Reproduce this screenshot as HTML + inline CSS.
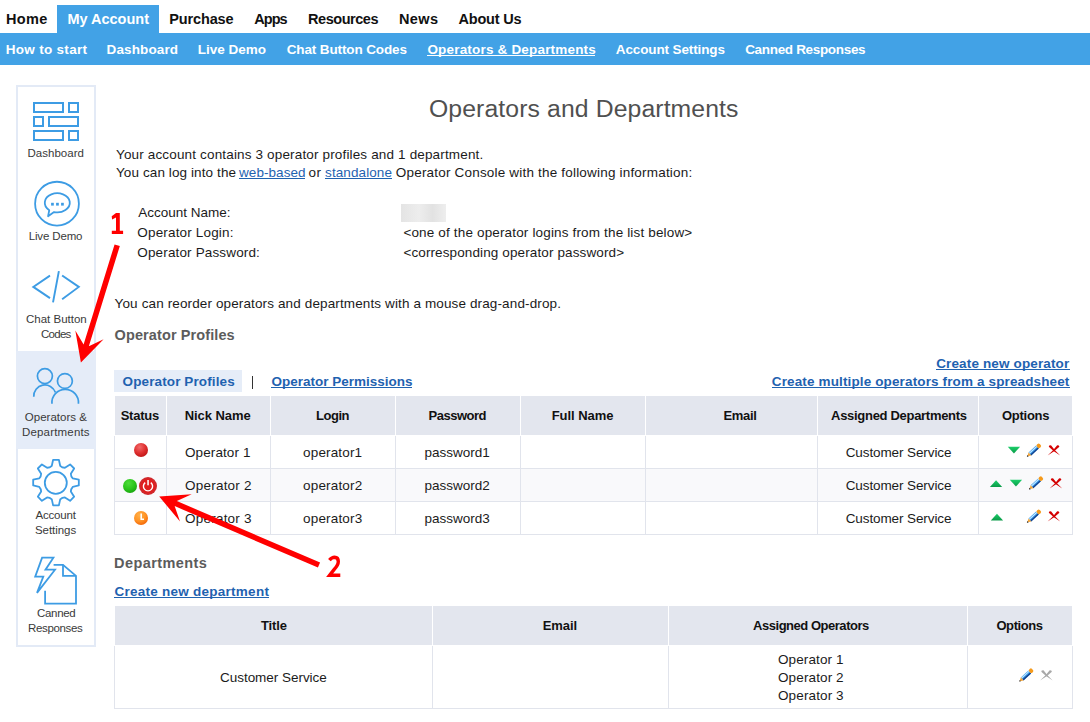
<!DOCTYPE html>
<html><head><meta charset="utf-8"><title>Operators and Departments</title>
<style>html,body{margin:0;padding:0;background:#fff;width:1090px;height:722px;overflow:hidden;position:relative;font-family:'Liberation Sans', sans-serif}</style>
</head><body>
<div style="position:absolute;left:57px;top:5px;width:102px;height:28px;background:#42a2e6;"></div>
<div style="position:absolute;left:0px;top:33px;width:1090px;height:32px;background:#42a2e6;"></div>
<div style="position:absolute;left:16px;top:85px;width:76px;height:558px;border:2px solid #e3eaf6"></div>
<div style="position:absolute;left:16px;top:351px;width:80px;height:98px;background:#e5ecf8;"></div>
<div style="position:absolute;left:401px;top:204px;width:45px;height:18px;background:linear-gradient(90deg,#e4e4e4,#ededed 40%,#e2e2e2 70%,#eeeeee);filter:blur(0.6px)"></div>
<div style="position:absolute;left:114px;top:370px;width:128px;height:22px;background:#e6edf8;"></div>
<div style="position:absolute;left:115px;top:396px;width:957px;height:39px;background:#e3e6ee;"></div>
<div style="position:absolute;left:166px;top:396px;width:1px;height:39px;background:#ffffff;"></div>
<div style="position:absolute;left:270px;top:396px;width:1px;height:39px;background:#ffffff;"></div>
<div style="position:absolute;left:395px;top:396px;width:1px;height:39px;background:#ffffff;"></div>
<div style="position:absolute;left:520px;top:396px;width:1px;height:39px;background:#ffffff;"></div>
<div style="position:absolute;left:645px;top:396px;width:1px;height:39px;background:#ffffff;"></div>
<div style="position:absolute;left:817px;top:396px;width:1px;height:39px;background:#ffffff;"></div>
<div style="position:absolute;left:978px;top:396px;width:1px;height:39px;background:#ffffff;"></div>
<div style="position:absolute;left:115px;top:469px;width:957px;height:32px;background:#f9f9fb;"></div>
<div style="position:absolute;left:114px;top:468px;width:959px;height:1px;background:#e1e4ec;"></div>
<div style="position:absolute;left:114px;top:501px;width:959px;height:1px;background:#e1e4ec;"></div>
<div style="position:absolute;left:114px;top:534px;width:959px;height:1px;background:#e1e4ec;"></div>
<div style="position:absolute;left:114px;top:436px;width:1px;height:98px;background:#e1e4ec;"></div>
<div style="position:absolute;left:166px;top:436px;width:1px;height:98px;background:#e1e4ec;"></div>
<div style="position:absolute;left:270px;top:436px;width:1px;height:98px;background:#e1e4ec;"></div>
<div style="position:absolute;left:395px;top:436px;width:1px;height:98px;background:#e1e4ec;"></div>
<div style="position:absolute;left:520px;top:436px;width:1px;height:98px;background:#e1e4ec;"></div>
<div style="position:absolute;left:645px;top:436px;width:1px;height:98px;background:#e1e4ec;"></div>
<div style="position:absolute;left:817px;top:436px;width:1px;height:98px;background:#e1e4ec;"></div>
<div style="position:absolute;left:978px;top:436px;width:1px;height:98px;background:#e1e4ec;"></div>
<div style="position:absolute;left:1072px;top:436px;width:1px;height:98px;background:#e1e4ec;"></div>
<div style="position:absolute;left:115px;top:606px;width:957px;height:39px;background:#e3e6ee;"></div>
<div style="position:absolute;left:432px;top:606px;width:1px;height:39px;background:#ffffff;"></div>
<div style="position:absolute;left:668px;top:606px;width:1px;height:39px;background:#ffffff;"></div>
<div style="position:absolute;left:967px;top:606px;width:1px;height:39px;background:#ffffff;"></div>
<div style="position:absolute;left:114px;top:708px;width:959px;height:1px;background:#e1e4ec;"></div>
<div style="position:absolute;left:114px;top:646px;width:1px;height:62px;background:#e1e4ec;"></div>
<div style="position:absolute;left:432px;top:646px;width:1px;height:62px;background:#e1e4ec;"></div>
<div style="position:absolute;left:668px;top:646px;width:1px;height:62px;background:#e1e4ec;"></div>
<div style="position:absolute;left:967px;top:646px;width:1px;height:62px;background:#e1e4ec;"></div>
<div style="position:absolute;left:1072px;top:646px;width:1px;height:62px;background:#e1e4ec;"></div>
<div style="position:absolute;left:252px;top:376px;width:1px;height:13px;background:#333"></div>
<div style="position:absolute;left:6.00px;top:12px;font:bold 14.5px/1 'Liberation Sans', sans-serif;letter-spacing:0.333px;white-space:nowrap;color:#111">Home</div>
<div style="position:absolute;left:67.40px;top:12px;font:bold 14.5px/1 'Liberation Sans', sans-serif;letter-spacing:0.000px;white-space:nowrap;color:#fff">My Account</div>
<div style="position:absolute;left:169.20px;top:12px;font:bold 14.5px/1 'Liberation Sans', sans-serif;letter-spacing:-0.129px;white-space:nowrap;color:#111">Purchase</div>
<div style="position:absolute;left:254.20px;top:12px;font:bold 14.5px/1 'Liberation Sans', sans-serif;letter-spacing:-0.933px;white-space:nowrap;color:#111">Apps</div>
<div style="position:absolute;left:308.10px;top:12px;font:bold 14.5px/1 'Liberation Sans', sans-serif;letter-spacing:-0.475px;white-space:nowrap;color:#111">Resources</div>
<div style="position:absolute;left:399.00px;top:12px;font:bold 14.5px/1 'Liberation Sans', sans-serif;letter-spacing:0.400px;white-space:nowrap;color:#111">News</div>
<div style="position:absolute;left:458.40px;top:12px;font:bold 14.5px/1 'Liberation Sans', sans-serif;letter-spacing:-0.171px;white-space:nowrap;color:#111">About Us</div>
<div style="position:absolute;left:5.70px;top:43px;font:bold 13.5px/1 'Liberation Sans', sans-serif;letter-spacing:0.300px;white-space:nowrap;color:#fff">How to start</div>
<div style="position:absolute;left:106.60px;top:43px;font:bold 13.5px/1 'Liberation Sans', sans-serif;letter-spacing:0.125px;white-space:nowrap;color:#fff">Dashboard</div>
<div style="position:absolute;left:197.70px;top:43px;font:bold 13.5px/1 'Liberation Sans', sans-serif;letter-spacing:0.000px;white-space:nowrap;color:#fff">Live Demo</div>
<div style="position:absolute;left:286.70px;top:43px;font:bold 13.5px/1 'Liberation Sans', sans-serif;letter-spacing:-0.119px;white-space:nowrap;color:#fff">Chat Button Codes</div>
<div style="position:absolute;left:427.40px;top:43px;font:bold 13.5px/1 'Liberation Sans', sans-serif;letter-spacing:0.186px;white-space:nowrap;color:#fff">Operators &amp; Departments</div>
<div style="position:absolute;left:427.1px;top:55px;width:168.3px;height:1px;background:#fff"></div>
<div style="position:absolute;left:615.80px;top:43px;font:bold 13.5px/1 'Liberation Sans', sans-serif;letter-spacing:-0.120px;white-space:nowrap;color:#fff">Account Settings</div>
<div style="position:absolute;left:745.20px;top:43px;font:bold 13.5px/1 'Liberation Sans', sans-serif;letter-spacing:-0.327px;white-space:nowrap;color:#fff">Canned Responses</div>
<div style="position:absolute;left:27.40px;top:148px;font:11.5px/1 'Liberation Sans', sans-serif;letter-spacing:0.038px;white-space:nowrap;color:#3a3a3a">Dashboard</div>
<div style="position:absolute;left:28.70px;top:231px;font:11.5px/1 'Liberation Sans', sans-serif;letter-spacing:-0.150px;white-space:nowrap;color:#3a3a3a">Live Demo</div>
<div style="position:absolute;left:26.00px;top:314px;font:11.5px/1 'Liberation Sans', sans-serif;letter-spacing:0.000px;white-space:nowrap;color:#3a3a3a">Chat Button</div>
<div style="position:absolute;left:40.90px;top:329px;font:11.5px/1 'Liberation Sans', sans-serif;letter-spacing:-0.700px;white-space:nowrap;color:#3a3a3a">Codes</div>
<div style="position:absolute;left:24.80px;top:412px;font:11.5px/1 'Liberation Sans', sans-serif;letter-spacing:0.020px;white-space:nowrap;color:#3a3a3a">Operators &amp;</div>
<div style="position:absolute;left:21.90px;top:427px;font:11.5px/1 'Liberation Sans', sans-serif;letter-spacing:0.190px;white-space:nowrap;color:#3a3a3a">Departments</div>
<div style="position:absolute;left:35.60px;top:510px;font:11.5px/1 'Liberation Sans', sans-serif;letter-spacing:-0.217px;white-space:nowrap;color:#3a3a3a">Account</div>
<div style="position:absolute;left:35.00px;top:525px;font:11.5px/1 'Liberation Sans', sans-serif;letter-spacing:-0.057px;white-space:nowrap;color:#3a3a3a">Settings</div>
<div style="position:absolute;left:37.10px;top:608px;font:11.5px/1 'Liberation Sans', sans-serif;letter-spacing:-0.340px;white-space:nowrap;color:#3a3a3a">Canned</div>
<div style="position:absolute;left:28.00px;top:623px;font:11.5px/1 'Liberation Sans', sans-serif;letter-spacing:-0.338px;white-space:nowrap;color:#3a3a3a">Responses</div>
<div style="position:absolute;left:429.00px;top:97px;font:24.75px/1 'Liberation Sans', sans-serif;letter-spacing:0.112px;white-space:nowrap;color:#505050">Operators and Departments</div>
<div style="position:absolute;left:116.00px;top:148px;font:13.5px/1 'Liberation Sans', sans-serif;letter-spacing:0.155px;white-space:nowrap;color:#1b1b1b">Your account contains 3 operator profiles and 1 department.</div>
<div style="position:absolute;left:116.00px;top:166px;font:13.5px/1 'Liberation Sans', sans-serif;letter-spacing:0.100px;white-space:nowrap;color:#1b1b1b">You can log into the</div>
<div style="position:absolute;left:239.00px;top:166px;font:13.5px/1 'Liberation Sans', sans-serif;letter-spacing:0.062px;white-space:nowrap;color:#1f62b0">web-based</div>
<div style="position:absolute;left:238.7px;top:178px;width:66.1px;height:1px;background:#1f62b0"></div>
<div style="position:absolute;left:308.60px;top:166px;font:13.5px/1 'Liberation Sans', sans-serif;letter-spacing:0.300px;white-space:nowrap;color:#1b1b1b">or</div>
<div style="position:absolute;left:325.10px;top:166px;font:13.5px/1 'Liberation Sans', sans-serif;letter-spacing:0.089px;white-space:nowrap;color:#1f62b0">standalone</div>
<div style="position:absolute;left:324.8px;top:178px;width:67.2px;height:1px;background:#1f62b0"></div>
<div style="position:absolute;left:395.80px;top:166px;font:13.5px/1 'Liberation Sans', sans-serif;letter-spacing:0.191px;white-space:nowrap;color:#1b1b1b">Operator Console with the following information:</div>
<div style="position:absolute;left:138.30px;top:206px;font:13.5px/1 'Liberation Sans', sans-serif;letter-spacing:-0.008px;white-space:nowrap;color:#1b1b1b">Account Name:</div>
<div style="position:absolute;left:137.30px;top:226px;font:13.5px/1 'Liberation Sans', sans-serif;letter-spacing:0.164px;white-space:nowrap;color:#1b1b1b">Operator Login:</div>
<div style="position:absolute;left:137.30px;top:246px;font:13.5px/1 'Liberation Sans', sans-serif;letter-spacing:0.147px;white-space:nowrap;color:#1b1b1b">Operator Password:</div>
<div style="position:absolute;left:403.40px;top:226px;font:13.5px/1 'Liberation Sans', sans-serif;letter-spacing:0.157px;white-space:nowrap;color:#1b1b1b">&lt;one of the operator logins from the list below&gt;</div>
<div style="position:absolute;left:403.40px;top:246px;font:13.5px/1 'Liberation Sans', sans-serif;letter-spacing:0.119px;white-space:nowrap;color:#1b1b1b">&lt;corresponding operator password&gt;</div>
<div style="position:absolute;left:114.60px;top:297px;font:13.5px/1 'Liberation Sans', sans-serif;letter-spacing:0.126px;white-space:nowrap;color:#1b1b1b">You can reorder operators and departments with a mouse drag-and-drop.</div>
<div style="position:absolute;left:114.60px;top:328px;font:bold 14.5px/1 'Liberation Sans', sans-serif;letter-spacing:0.100px;white-space:nowrap;color:#5c5c5c">Operator Profiles</div>
<div style="position:absolute;left:122.60px;top:375px;font:bold 13.5px/1 'Liberation Sans', sans-serif;letter-spacing:0.112px;white-space:nowrap;color:#1f62b0">Operator Profiles</div>
<div style="position:absolute;left:271.50px;top:375px;font:bold 13.5px/1 'Liberation Sans', sans-serif;letter-spacing:-0.005px;white-space:nowrap;color:#1f62b0">Operator Permissions</div>
<div style="position:absolute;left:271.2px;top:387px;width:140.9px;height:1px;background:#1f62b0"></div>
<div style="position:absolute;left:936.20px;top:357px;font:bold 13.5px/1 'Liberation Sans', sans-serif;letter-spacing:0.139px;white-space:nowrap;color:#1f62b0">Create new operator</div>
<div style="position:absolute;left:935.9px;top:369px;width:134.1px;height:1px;background:#1f62b0"></div>
<div style="position:absolute;left:771.80px;top:375px;font:bold 13.5px/1 'Liberation Sans', sans-serif;letter-spacing:0.133px;white-space:nowrap;color:#1f62b0">Create multiple operators from a spreadsheet</div>
<div style="position:absolute;left:771.5px;top:387px;width:298.5px;height:1px;background:#1f62b0"></div>
<div style="position:absolute;left:120.70px;top:409px;font:bold 13.0px/1 'Liberation Sans', sans-serif;letter-spacing:-0.240px;white-space:nowrap;color:#111">Status</div>
<div style="position:absolute;left:184.70px;top:409px;font:bold 13.0px/1 'Liberation Sans', sans-serif;letter-spacing:-0.050px;white-space:nowrap;color:#111">Nick Name</div>
<div style="position:absolute;left:316.00px;top:409px;font:bold 13.0px/1 'Liberation Sans', sans-serif;letter-spacing:-0.475px;white-space:nowrap;color:#111">Login</div>
<div style="position:absolute;left:428.60px;top:409px;font:bold 13.0px/1 'Liberation Sans', sans-serif;letter-spacing:-0.500px;white-space:nowrap;color:#111">Password</div>
<div style="position:absolute;left:551.70px;top:409px;font:bold 13.0px/1 'Liberation Sans', sans-serif;letter-spacing:-0.050px;white-space:nowrap;color:#111">Full Name</div>
<div style="position:absolute;left:723.50px;top:409px;font:bold 13.0px/1 'Liberation Sans', sans-serif;letter-spacing:-0.325px;white-space:nowrap;color:#111">Email</div>
<div style="position:absolute;left:831.10px;top:409px;font:bold 13.0px/1 'Liberation Sans', sans-serif;letter-spacing:-0.300px;white-space:nowrap;color:#111">Assigned Departments</div>
<div style="position:absolute;left:1002.00px;top:409px;font:bold 13.0px/1 'Liberation Sans', sans-serif;letter-spacing:-0.267px;white-space:nowrap;color:#111">Options</div>
<div style="position:absolute;left:185.00px;top:446px;font:13.5px/1 'Liberation Sans', sans-serif;letter-spacing:0.100px;white-space:nowrap;color:#1b1b1b">Operator 1</div>
<div style="position:absolute;left:303.10px;top:446px;font:13.5px/1 'Liberation Sans', sans-serif;letter-spacing:0.150px;white-space:nowrap;color:#1b1b1b">operator1</div>
<div style="position:absolute;left:424.40px;top:446px;font:13.5px/1 'Liberation Sans', sans-serif;letter-spacing:0.013px;white-space:nowrap;color:#1b1b1b">password1</div>
<div style="position:absolute;left:845.70px;top:446px;font:13.5px/1 'Liberation Sans', sans-serif;letter-spacing:-0.100px;white-space:nowrap;color:#1b1b1b">Customer Service</div>
<div style="position:absolute;left:185.00px;top:479px;font:13.5px/1 'Liberation Sans', sans-serif;letter-spacing:0.222px;white-space:nowrap;color:#1b1b1b">Operator 2</div>
<div style="position:absolute;left:303.10px;top:479px;font:13.5px/1 'Liberation Sans', sans-serif;letter-spacing:0.162px;white-space:nowrap;color:#1b1b1b">operator2</div>
<div style="position:absolute;left:424.40px;top:479px;font:13.5px/1 'Liberation Sans', sans-serif;letter-spacing:0.025px;white-space:nowrap;color:#1b1b1b">password2</div>
<div style="position:absolute;left:845.70px;top:479px;font:13.5px/1 'Liberation Sans', sans-serif;letter-spacing:-0.100px;white-space:nowrap;color:#1b1b1b">Customer Service</div>
<div style="position:absolute;left:185.00px;top:512px;font:13.5px/1 'Liberation Sans', sans-serif;letter-spacing:0.222px;white-space:nowrap;color:#1b1b1b">Operator 3</div>
<div style="position:absolute;left:303.10px;top:512px;font:13.5px/1 'Liberation Sans', sans-serif;letter-spacing:0.162px;white-space:nowrap;color:#1b1b1b">operator3</div>
<div style="position:absolute;left:424.40px;top:512px;font:13.5px/1 'Liberation Sans', sans-serif;letter-spacing:0.025px;white-space:nowrap;color:#1b1b1b">password3</div>
<div style="position:absolute;left:845.70px;top:512px;font:13.5px/1 'Liberation Sans', sans-serif;letter-spacing:-0.100px;white-space:nowrap;color:#1b1b1b">Customer Service</div>
<div style="position:absolute;left:114.00px;top:556px;font:bold 14.5px/1 'Liberation Sans', sans-serif;letter-spacing:0.420px;white-space:nowrap;color:#5c5c5c">Departments</div>
<div style="position:absolute;left:114.40px;top:585px;font:bold 13.5px/1 'Liberation Sans', sans-serif;letter-spacing:0.260px;white-space:nowrap;color:#1f62b0">Create new department</div>
<div style="position:absolute;left:114.1px;top:597px;width:155.0px;height:1px;background:#1f62b0"></div>
<div style="position:absolute;left:261.00px;top:619px;font:bold 13.0px/1 'Liberation Sans', sans-serif;letter-spacing:-0.125px;white-space:nowrap;color:#111">Title</div>
<div style="position:absolute;left:542.80px;top:619px;font:bold 13.0px/1 'Liberation Sans', sans-serif;letter-spacing:-0.100px;white-space:nowrap;color:#111">Email</div>
<div style="position:absolute;left:753.10px;top:619px;font:bold 13.0px/1 'Liberation Sans', sans-serif;letter-spacing:-0.476px;white-space:nowrap;color:#111">Assigned Operators</div>
<div style="position:absolute;left:996.40px;top:619px;font:bold 13.0px/1 'Liberation Sans', sans-serif;letter-spacing:-0.400px;white-space:nowrap;color:#111">Options</div>
<div style="position:absolute;left:220.00px;top:671px;font:13.5px/1 'Liberation Sans', sans-serif;letter-spacing:-0.033px;white-space:nowrap;color:#1b1b1b">Customer Service</div>
<div style="position:absolute;left:778.00px;top:653px;font:13.5px/1 'Liberation Sans', sans-serif;letter-spacing:0.111px;white-space:nowrap;color:#1b1b1b">Operator 1</div>
<div style="position:absolute;left:778.00px;top:671px;font:13.5px/1 'Liberation Sans', sans-serif;letter-spacing:0.122px;white-space:nowrap;color:#1b1b1b">Operator 2</div>
<div style="position:absolute;left:778.00px;top:689px;font:13.5px/1 'Liberation Sans', sans-serif;letter-spacing:0.122px;white-space:nowrap;color:#1b1b1b">Operator 3</div>
<svg width="1090" height="722" viewBox="0 0 1090 722" style="position:absolute;left:0;top:0">
<defs>
<radialGradient id="gR" cx="40%" cy="30%" r="70%"><stop offset="0" stop-color="#f26a6a"/><stop offset="0.6" stop-color="#df3030"/><stop offset="1" stop-color="#c21818"/></radialGradient>
<radialGradient id="gG" cx="40%" cy="30%" r="70%"><stop offset="0" stop-color="#4edc3a"/><stop offset="0.6" stop-color="#2cc61c"/><stop offset="1" stop-color="#1aa810"/></radialGradient>
<radialGradient id="gO" cx="40%" cy="30%" r="70%"><stop offset="0" stop-color="#ffb04a"/><stop offset="0.6" stop-color="#ff9426"/><stop offset="1" stop-color="#f46a0a"/></radialGradient>
<linearGradient id="gT" x1="0" y1="0" x2="0" y2="1"><stop offset="0" stop-color="#1ccf6a"/><stop offset="1" stop-color="#0a9a48"/></linearGradient>
</defs>
<g fill="none" stroke="#3d9ce4" stroke-width="2"><rect x="34" y="103" width="29" height="9"/><rect x="69" y="103" width="9" height="9"/><rect x="34" y="117" width="9" height="9"/><rect x="49" y="117" width="29" height="9"/><rect x="34" y="131" width="29" height="9"/><rect x="69" y="131" width="9" height="9"/></g>
<g fill="none" stroke="#3d9ce4" stroke-width="1.8"><circle cx="57" cy="203.65" r="21.9"/><path d="M49.27,210.17 A12.5,9.55 0 1 1 54.06,212.07 L48.1,216.2 Z" stroke-linejoin="round"/></g>
<g fill="#3d9ce4"><rect x="51.1" y="202.8" width="2.7" height="2.8"/><rect x="56.1" y="202.8" width="2.7" height="2.8"/><rect x="61.1" y="202.8" width="2.7" height="2.8"/></g>
<g fill="none" stroke="#3d9ce4" stroke-width="1.9" stroke-linecap="square" stroke-linejoin="miter"><path d="M49.2,276.1 L33.3,286.9 L49.2,297.6"/><path d="M62.9,276.1 L78.8,286.9 L62.9,298.6"/><path d="M58.7,272 L53.2,301.5"/></g>
<g fill="none" stroke="#3d9ce4" stroke-width="1.7"><circle cx="44.9" cy="376.1" r="7.5"/><circle cx="64.9" cy="381" r="7.45"/><path d="M33.77,396.68 A11.15,11.15 0 0 1 55.41,392.38"/><path d="M51.95,403.76 A13.3,13.3 0 1 1 78.45,403.76"/></g>
<g fill="none" stroke="#3d9ce4" stroke-width="1.8" stroke-linejoin="round"><path d="M51.81,465.81 L53.12,459.78 L58.88,459.78 L60.19,465.81 Q62.16,467.73 64.91,467.77 L70.10,464.43 L74.17,468.50 L70.83,473.69 Q70.87,476.44 72.79,478.41 L78.82,479.72 L78.82,485.48 L72.79,486.79 Q70.87,488.76 70.83,491.51 L74.17,496.70 L70.10,500.77 L64.91,497.43 Q62.16,497.47 60.19,499.39 L58.88,505.42 L53.12,505.42 L51.81,499.39 Q49.84,497.47 47.09,497.43 L41.90,500.77 L37.83,496.70 L41.17,491.51 Q41.13,488.76 39.21,486.79 L33.18,485.48 L33.18,479.72 L39.21,478.41 Q41.13,476.44 41.17,473.69 L37.83,468.50 L41.90,464.43 L47.09,467.77 Q49.84,467.73 51.81,465.81 Z"/><circle cx="55.8" cy="482.8" r="11"/></g>
<g fill="none" stroke="#3d9ce4" stroke-width="1.8" stroke-linejoin="miter"><path d="M42.1,557.7 L53.4,557.7 L45.5,569.7 L55,569.7 L37,592.9 L43.3,576.6 L35.2,576.6 Z"/><path d="M53.6,564.8 L63,564.8 L76,575.9 L76,603.7 L45.1,603.7 L45.1,590.8"/><path d="M63,564.8 L63,575.9 L76,575.9"/></g>
<circle cx="141" cy="450" r="7" fill="url(#gR)"/>
<circle cx="130" cy="486" r="7" fill="url(#gG)"/>
<circle cx="148" cy="486" r="9" fill="#d0282c"/><circle cx="148" cy="486" r="7.2" fill="#e01e1e"/><path d="M145.2,482.6 A4.6,4.6 0 1 0 150.8,482.6" fill="none" stroke="#fff" stroke-width="1.4"/><rect x="147.3" y="480" width="1.5" height="5.3" fill="#fff"/>
<circle cx="141" cy="518" r="7" fill="url(#gO)"/><path d="M141.2,513.5 L141.2,519.2 L144,519.2" fill="none" stroke="#fff" stroke-width="1.6"/>
<path d="M1007.8,446.7 L1020.0999999999999,446.7 L1013.9499999999999,453.4 Z" fill="url(#gT)"/>
<g transform="translate(1026.9,456.7) rotate(-42.4)"><rect x="4.0" y="-2.0" width="10.3" height="4.0" fill="#3b9ff0"/><rect x="4.0" y="-1.4" width="10.3" height="0.9" fill="#d8f0ff"/><rect x="4.0" y="0.6" width="10.3" height="1.4" fill="#16408a"/><path d="M4.1,-2.1 L0.7,0 L4.1,2.1 Z" fill="#f2a43a"/><path d="M0,0 L1.5,-0.95 L1.5,0.95 Z" fill="#111"/><rect x="14.2" y="-2.2" width="3.8" height="4.4" rx="1.5" fill="#f59a1b"/></g>
<g fill="#d40000"><path d="M1049.2,445.5 L1051.0,445.3 Q1054,449.90000000000003 1060.2,455.40000000000003 Q1053,451.3 1048.8,446.7 Z"/><path d="M1058.8,445.5 L1057.2,445.3 Q1054,449.90000000000003 1047.6,455.40000000000003 Q1055,451.3 1059.4,446.7 Z"/></g>
<path d="M989.9,487.0 L1002.1999999999999,487.0 L996.05,480.3 Z" fill="url(#gT)"/>
<path d="M1009.8,479.8 L1022.0999999999999,479.8 L1015.9499999999999,486.5 Z" fill="url(#gT)"/>
<g transform="translate(1029,489.5) rotate(-42.4)"><rect x="4.0" y="-2.0" width="10.3" height="4.0" fill="#3b9ff0"/><rect x="4.0" y="-1.4" width="10.3" height="0.9" fill="#d8f0ff"/><rect x="4.0" y="0.6" width="10.3" height="1.4" fill="#16408a"/><path d="M4.1,-2.1 L0.7,0 L4.1,2.1 Z" fill="#f2a43a"/><path d="M0,0 L1.5,-0.95 L1.5,0.95 Z" fill="#111"/><rect x="14.2" y="-2.2" width="3.8" height="4.4" rx="1.5" fill="#f59a1b"/></g>
<g fill="#d40000"><path d="M1051.2,478.5 L1053.0,478.3 Q1056,482.90000000000003 1062.2,488.40000000000003 Q1055,484.3 1050.8,479.7 Z"/><path d="M1060.8,478.5 L1059.2,478.3 Q1056,482.90000000000003 1049.6,488.40000000000003 Q1057,484.3 1061.4,479.7 Z"/></g>
<path d="M990.8,520.4000000000001 L1003.0999999999999,520.4000000000001 L996.9499999999999,513.7 Z" fill="url(#gT)"/>
<g transform="translate(1026.9,522.7) rotate(-42.4)"><rect x="4.0" y="-2.0" width="10.3" height="4.0" fill="#3b9ff0"/><rect x="4.0" y="-1.4" width="10.3" height="0.9" fill="#d8f0ff"/><rect x="4.0" y="0.6" width="10.3" height="1.4" fill="#16408a"/><path d="M4.1,-2.1 L0.7,0 L4.1,2.1 Z" fill="#f2a43a"/><path d="M0,0 L1.5,-0.95 L1.5,0.95 Z" fill="#111"/><rect x="14.2" y="-2.2" width="3.8" height="4.4" rx="1.5" fill="#f59a1b"/></g>
<g fill="#d40000"><path d="M1049.2,511.5 L1051.0,511.3 Q1054,515.9 1060.2,521.4 Q1053,517.3 1048.8,512.7 Z"/><path d="M1058.8,511.5 L1057.2,511.3 Q1054,515.9 1047.6,521.4 Q1055,517.3 1059.4,512.7 Z"/></g>
<g transform="translate(1019.2,681.6) rotate(-42.4)"><rect x="4.0" y="-2.0" width="10.3" height="4.0" fill="#3b9ff0"/><rect x="4.0" y="-1.4" width="10.3" height="0.9" fill="#d8f0ff"/><rect x="4.0" y="0.6" width="10.3" height="1.4" fill="#16408a"/><path d="M4.1,-2.1 L0.7,0 L4.1,2.1 Z" fill="#f2a43a"/><path d="M0,0 L1.5,-0.95 L1.5,0.95 Z" fill="#111"/><rect x="14.2" y="-2.2" width="3.8" height="4.4" rx="1.5" fill="#f59a1b"/></g>
<g fill="#a8a8a8"><path d="M1041.7,670.5 L1043.5,670.3 Q1046.5,674.9 1052.7,680.4 Q1045.5,676.3 1041.3,671.6999999999999 Z"/><path d="M1051.3,670.5 L1049.7,670.3 Q1046.5,674.9 1040.1,680.4 Q1047.5,676.3 1051.9,671.6999999999999 Z"/></g>
<path d="M114.57,244.39 L83.59,344.59 L75.33,330.52 L80.90,362.60 L103.61,339.27 L88.84,346.22 L119.83,246.01 Z" fill="#ff0000"/>
<path d="M320.08,562.47 L176.83,501.06 L191.69,494.32 L159.20,496.50 L180.02,521.53 L174.66,506.12 L317.92,567.53 Z" fill="#ff0000"/>
<path d="M116,213 L119.8,213 L119.8,230.8 L123.1,230.8 L123.1,234.1 L111.8,234.1 L111.8,230.8 L116,230.8 L116,217.4 L112.1,219.5 L111.7,216.2 Z" fill="#ff0000"/>
<path d="M329.4,560.2 C331.3,557.9 333.2,557.3 334.6,557.3 C337.2,557.4 338.3,559.2 338.3,561.6 C338.3,564.2 337,566.4 334.4,569.2 L329.6,575.3 L340.3,575.3" fill="none" stroke="#ff0000" stroke-width="3.4" stroke-linejoin="miter"/>
</svg>
</body></html>
